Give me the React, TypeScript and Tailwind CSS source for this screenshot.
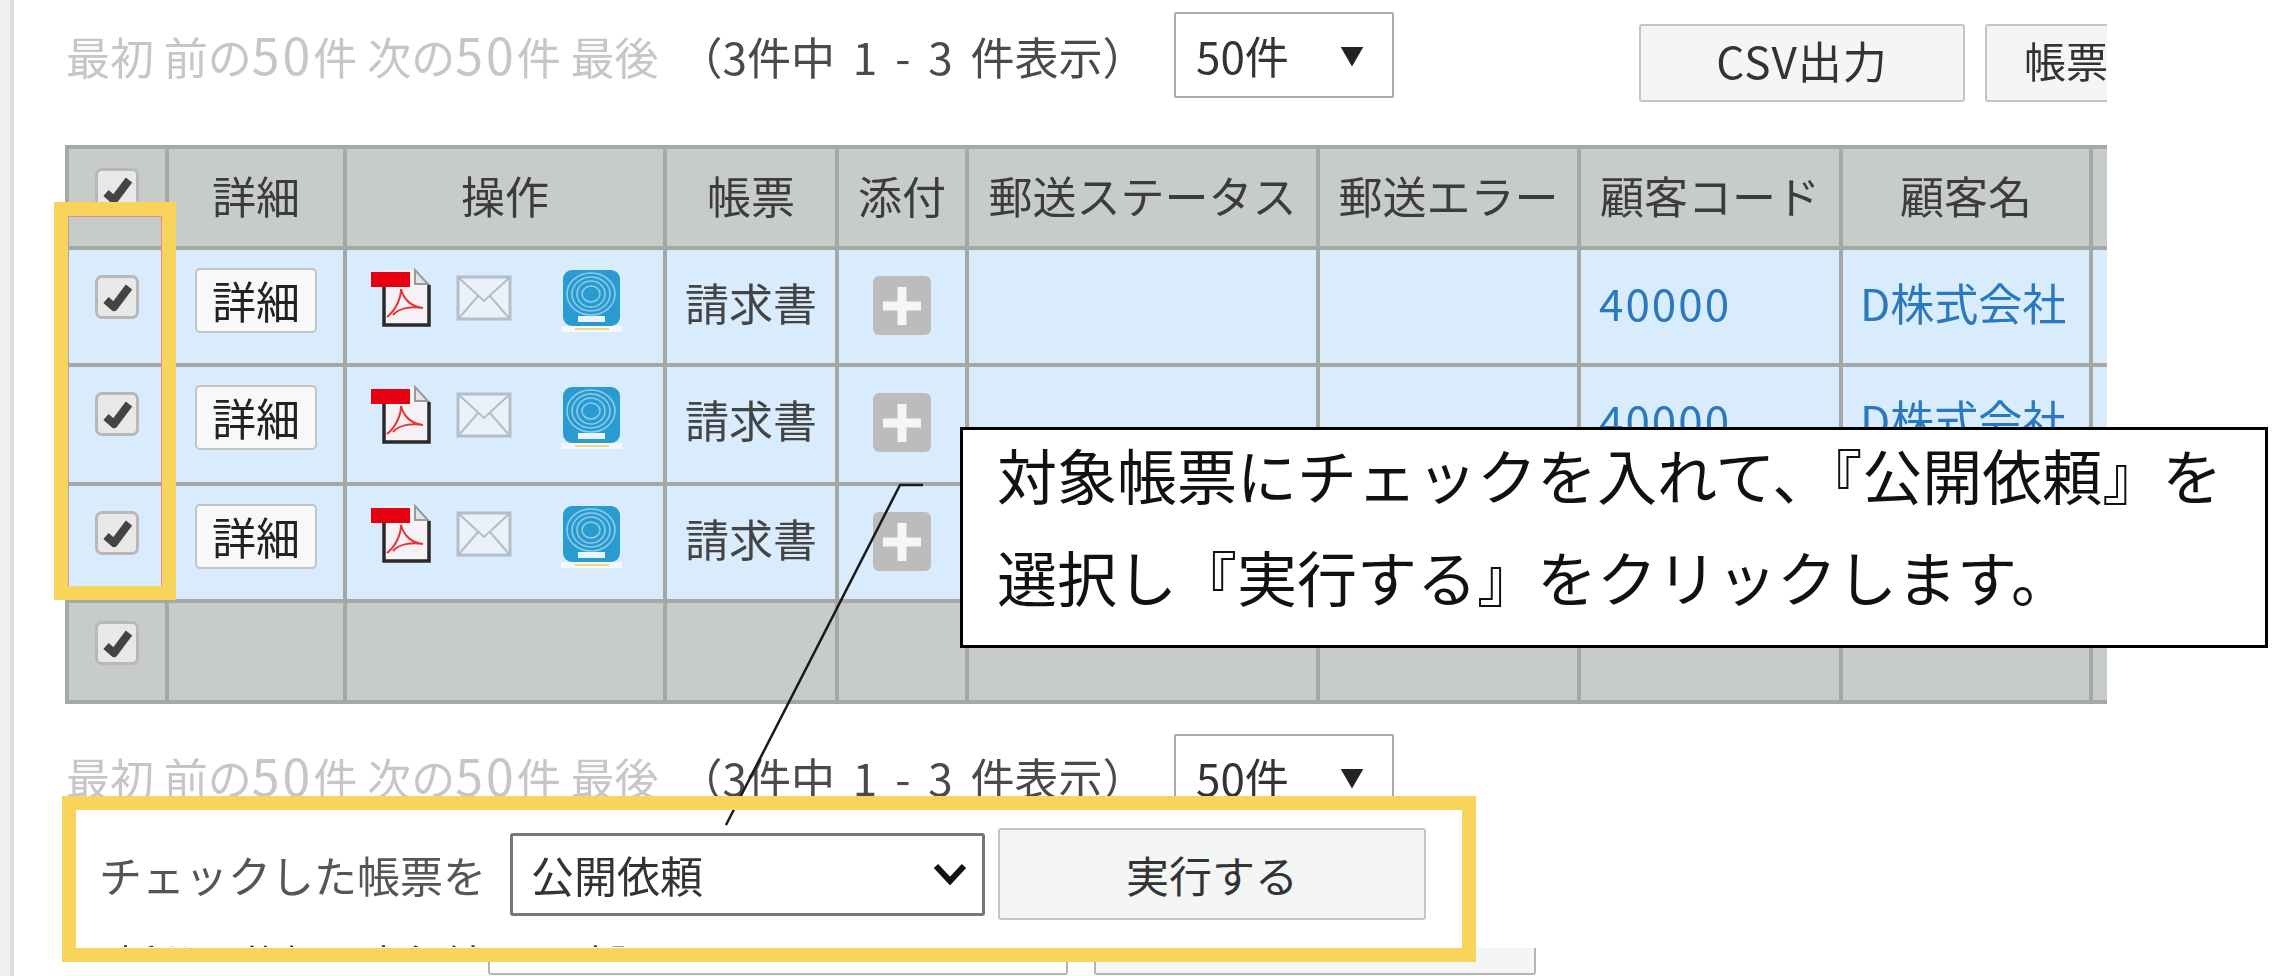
import React from "react";

const font = { fontFamily: '"Noto Sans CJK JP", "Noto Sans", sans-serif' };

function Check() {
  return (
    <span className="block w-[44px] h-[44px] rounded-[7px] border-[3px] border-[#b8b8b8] bg-[#e8e8e8] mx-auto">
      <svg viewBox="0 0 38 38" className="w-full h-full">
        <path d="M8 22 L16 29 L31 9" fill="none" stroke="#444" strokeWidth="8" strokeLinejoin="round" />
      </svg>
    </span>
  );
}

function PdfIcon() {
  return (
    <svg viewBox="0 0 60 61" className="w-[60px] h-[61px] shrink-0">
      <path d="M13 3 H44 L57 17 V57 H13 Z" fill="#f4f2f4" />
      <path d="M44 3 L44 17 H57 Z" fill="#e4e4e4" stroke="#999" strokeWidth="2" />
      <path d="M13 20 V58 H58 V18" fill="none" stroke="#2a2a2a" strokeWidth="3.5" />
      <path d="M16 50 C24 44 30 32 30 22 C33 34 42 40 52 41 C40 39 28 41 22 48" fill="none" stroke="#e8323a" strokeWidth="2" />
      <rect x="0" y="5" width="39" height="15" fill="#e60012" />
    </svg>
  );
}

function MailIcon() {
  return (
    <svg viewBox="0 0 56 46" className="w-[56px] h-[46px] shrink-0 mt-[8px]">
      <rect x="2" y="2" width="52" height="42" fill="#e9f1f9" stroke="#b4bec9" strokeWidth="3" />
      <path d="M3 3 L28 26 L53 3 M3 43 L22 21 M53 43 L34 21" fill="none" stroke="#b4bec9" strokeWidth="2" />
    </svg>
  );
}

function BlueIcon() {
  return (
    <svg viewBox="0 0 61 63" className="w-[61px] h-[63px] shrink-0 mt-[2px]">
      <rect x="0" y="57" width="61" height="6" fill="#f5f8fb" />
      <rect x="14" y="59" width="34" height="2" fill="#ecd977" />
      <rect x="2" y="1" width="57" height="56" rx="9" fill="#2a9bd0" />
      <g fill="none" stroke="#8fcde8" strokeWidth="1.5">
        <ellipse cx="30" cy="25" rx="24" ry="21" />
        <ellipse cx="30" cy="25" rx="19" ry="17" />
        <ellipse cx="30" cy="25" rx="14" ry="13" />
        <ellipse cx="30" cy="25" rx="9" ry="8" />
      </g>
      <rect x="17" y="47" width="27" height="6" fill="#e8f5fb" />
    </svg>
  );
}

function PlusButton() {
  return (
    <span className="block w-[58px] h-[59px] rounded-[6px] bg-[#bcbcbc] mx-auto mt-[26px] relative">
      <svg viewBox="0 0 58 59" className="w-full h-full">
        <path d="M29 11 V49 M10 30 H48" stroke="#f6f6f6" strokeWidth="9" fill="none" />
      </svg>
    </span>
  );
}

function Fifty() {
  return <span className="text-[50px] leading-none tracking-[3px]">50</span>;
}

function Pager() {
  return (
    <div className="w-[1108px] shrink-0 h-[86px] leading-[86px] text-[44px] whitespace-nowrap">
      <span className="text-[#c6c6c6]">
        最初 前の<Fifty />件 次の<Fifty />件 最後
      </span>
      <span className="text-[#4a4a4a] ml-[20px] [word-spacing:8px]">（3件中 1 - 3 件表示）</span>
    </div>
  );
}

function PageSelect() {
  return (
    <div className="w-[220px] h-[86px] shrink-0 border-2 border-[#aaaaaa] rounded-[2px] bg-white flex items-center justify-between pl-[20px] pr-[28px] text-[44px] text-[#333]">
      <span>50件</span>
      <span className="text-[24px] text-[#222]">▼</span>
    </div>
  );
}

const heads = ["詳細", "操作", "帳票", "添付", "郵送ステータス", "郵送エラー", "顧客コード", "顧客名", ""];
const cellLine = "border-[4px] border-[#a6a8a6] p-0";

function Row({ h }: { h: string }) {
  return (
    <tr className={`bg-[#d8ecfe] ${h}`}>
      <td className={`${cellLine} align-top pt-[25px]`}>
        <Check />
      </td>
      <td className={`${cellLine} align-top pt-[18px]`}>
        <span className="mx-auto block w-[122px] h-[65px] rounded-[5px] border-2 border-[#c4c4c4] bg-[#f8f8f8] text-center leading-[60px] text-[#222]">
          詳細
        </span>
      </td>
      <td className={`${cellLine} align-top pt-[17px] pl-[24px]`}>
        <div className="flex items-start">
          <PdfIcon />
          <span className="ml-[25px]">
            <MailIcon />
          </span>
          <span className="ml-[49px]">
            <BlueIcon />
          </span>
        </div>
      </td>
      <td className={`${cellLine} align-top text-center leading-[104px] text-[#444]`}>請求書</td>
      <td className={`${cellLine} align-top`}>
        <PlusButton />
      </td>
      <td className={cellLine}></td>
      <td className={cellLine}></td>
      <td className={`${cellLine} align-top pl-[18px] leading-[104px] text-[#2a78bd] tracking-[2px]`}>40000</td>
      <td className={`${cellLine} align-top pl-[17px] leading-[104px] text-[#2a78bd] whitespace-nowrap`}>D株式会社</td>
      <td className={cellLine}></td>
    </tr>
  );
}

export default function App() {
  return (
    <div style={font} className="relative w-[2279px] h-[976px] overflow-hidden bg-white flex">
      <div className="w-[14px] shrink-0 h-full bg-[#eff1ef] border-r-4 border-[#dde0de]" />
      <div className="w-[2093px] shrink-0 h-full pl-[52px] overflow-hidden blur-[0.7px]">
        <div className="h-[145px] pt-[12px] flex items-start">
          <div className="mt-[1px]">
            <Pager />
          </div>
          <PageSelect />
          <button className="ml-[245px] mt-[12px] w-[326px] h-[78px] shrink-0 border-2 border-[#c4c6c4] rounded-[3px] bg-[#f4f6f5] text-[44px] tracking-[1px] leading-[66px] pb-[6px] text-[#333] text-center">
            CSV出力
          </button>
          <button className="ml-[20px] mt-[12px] w-[200px] h-[78px] shrink-0 border-2 border-[#c4c6c4] rounded-[3px] bg-[#f4f6f5] text-[42px] leading-[66px] pb-[6px] text-[#333] text-left pl-[37px] whitespace-nowrap">
            帳票出力
          </button>
        </div>
        <table className="table-fixed border-collapse w-[2124px] text-[44px] -ml-[1px]">
          <colgroup>
            <col className="w-[100px]" />
            <col className="w-[178px]" />
            <col className="w-[320px]" />
            <col className="w-[172px]" />
            <col className="w-[130px]" />
            <col className="w-[351px]" />
            <col className="w-[261px]" />
            <col className="w-[262px]" />
            <col className="w-[250px]" />
            <col className="w-[100px]" />
          </colgroup>
          <tbody>
            <tr className="bg-[#c8ccc8] h-[101px]">
              <td className={`${cellLine} align-top pt-[19px]`}>
                <Check />
              </td>
              {heads.map((t, i) => (
                <td key={i} className={`${cellLine} text-center text-[#3c3c3c] whitespace-nowrap pb-[6px]`}>
                  {t}
                </td>
              ))}
            </tr>
            <Row h="h-[117px]" />
            <Row h="h-[119px]" />
            <Row h="h-[117px]" />
            <tr className="bg-[#c8ccc8] h-[101px]">
              <td className={`${cellLine} align-top pt-[18px]`}>
                <Check />
              </td>
              {heads.map((_, i) => (
                <td key={i} className={cellLine}></td>
              ))}
            </tr>
          </tbody>
        </table>
        <div className="mt-[30px] flex items-start">
          <Pager />
          <PageSelect />
        </div>
        <div className="mt-[128px] ml-[422px] flex items-start gap-[26px]">
          <div className="w-[580px] h-[27px] border-2 border-t-0 border-[#b4b4b4] rounded-b-[3px] bg-white" />
          <div className="w-[442px] h-[27px] border-2 border-t-0 border-[#b4b4b4] rounded-b-[3px] bg-[#f4f6f5]" />
        </div>
      </div>

      <div className="absolute left-[76px] top-[810px] w-[1386px] h-[137px] bg-white overflow-hidden pt-[18px] text-[#555]">
        <div className="flex items-center h-[92px] blur-[0.6px]">
          <span className="ml-[23px] text-[43px] w-[411px] shrink-0 whitespace-nowrap">チェックした帳票を</span>
          <div className="w-[475px] h-[83px] shrink-0 border-[3px] border-[#777] rounded-[3px] bg-white flex items-center justify-between pl-[18px] pr-[15px] text-[43px] text-[#333]">
            <span>公開依頼</span>
            <svg viewBox="0 0 34 22" className="w-[34px] h-[22px]">
              <path d="M3 3 L17 18 L31 3" fill="none" stroke="#111" strokeWidth="6" />
            </svg>
          </div>
          <button className="ml-[13px] w-[428px] h-[92px] shrink-0 border-2 border-[#c4c6c4] rounded-[3px] bg-[#f4f6f5] text-[43px] text-[#333]">
            実行する
          </button>
        </div>
        <div className="mt-[21px] leading-[42px] text-[41px] text-[#333] whitespace-nowrap blur-[0.6px]">一括公開依頼の実行結果を確認する</div>
      </div>

      <svg className="absolute left-0 top-0 w-[2279px] h-[976px]" viewBox="0 0 2279 976">
        <path d="M923 485 H900 L726 825" fill="none" stroke="#1a1a1a" strokeWidth="2.5" />
      </svg>

      <div className="absolute left-[54px] top-[202px] w-[122px] h-[398px] border-[14px] border-[#f8d45c] shadow-[inset_0_1px_0_#f08a90,inset_-1px_0_0_#f08a90]" />
      <div className="absolute left-[62px] top-[796px] w-[1414px] h-[166px] border-[14px] border-[#f8d45c]" />

      <div className="absolute left-[960px] top-[427px] w-[1308px] h-[221px] border-[3px] border-black bg-white pl-[34px] text-[60px] text-[#111] leading-[102px] whitespace-nowrap">
        <div className="-mt-[7px] blur-[0.4px]">
          <div>対象帳票にチェックを入れて、『公開依頼』を</div>
          <div>選択し『実行する』をクリックします。</div>
        </div>
      </div>
    </div>
  );
}
